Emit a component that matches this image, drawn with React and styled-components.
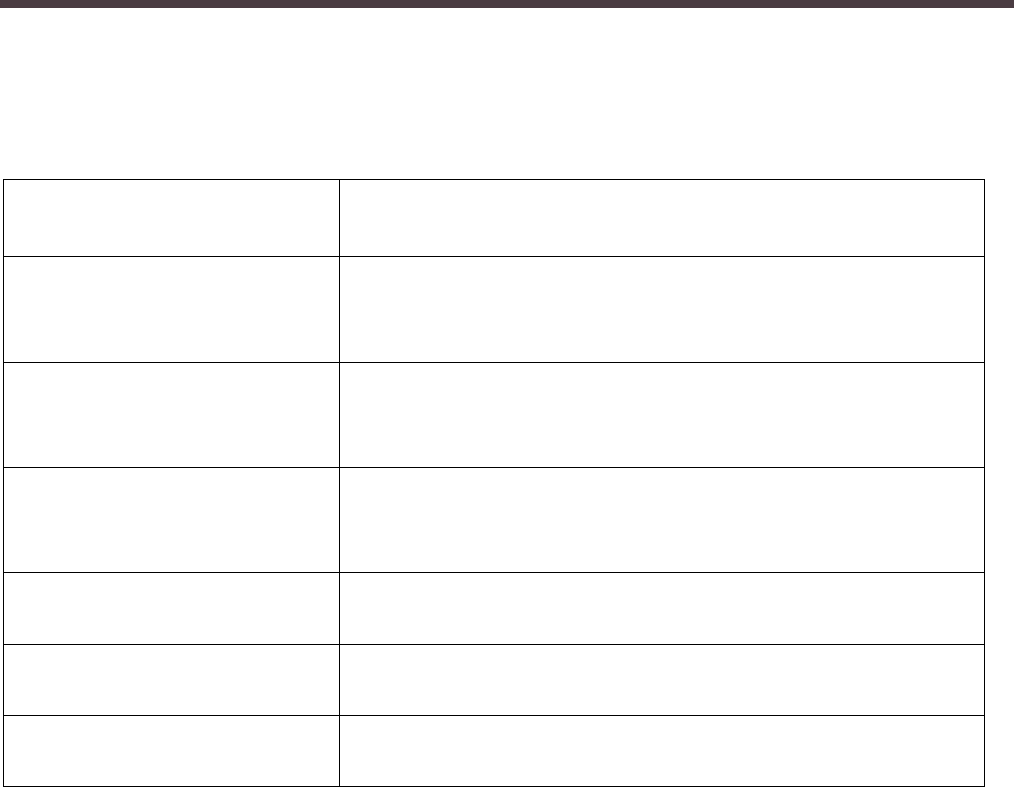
import React from "react";
import styled, { createGlobalStyle } from "styled-components";

const GlobalStyle = createGlobalStyle`
  body {
    margin: 0;
    background: #ffffff;
    font-family: "Liberation Sans", Arial, sans-serif;
  }
`;

const TopBar = styled.div`
  height: 8px;
  background: #4a3c42;
`;

const Page = styled.div`
  padding: 171px 0 0 3px;
`;

const Grid = styled.div`
  display: grid;
  grid-template-columns: 336px 645px;
  width: 981px;
  border-top: 1px solid #000;
  border-left: 1px solid #000;
`;

const Cell = styled.div`
  height: ${(p) => p.$h}px;
  border-right: 1px solid #000;
  border-bottom: 1px solid #000;
  box-sizing: border-box;
  padding: 8px 12px;
  font-size: 14px;
  color: #222;
`;

const rows = [77, 106, 105, 105, 72, 71, 71];

const App = () => {
  return (
    <>
      <GlobalStyle />
      <TopBar />
      <Page>
        <Grid>
          {rows.map((h, i) => (
            <React.Fragment key={i}>
              <Cell $h={h} />
              <Cell $h={h} />
            </React.Fragment>
          ))}
        </Grid>
      </Page>
    </>
  );
};

export default App;
